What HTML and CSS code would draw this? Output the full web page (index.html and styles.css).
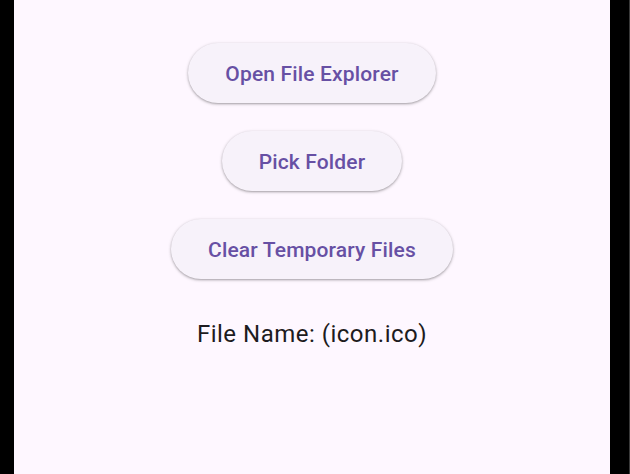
FILE: index.html
```html
<!DOCTYPE html>
<html>
<head>
<meta charset="utf-8">
<link rel="stylesheet" href="styles.css">
</head>
<body>
<div class="frame">
  <main class="app">
    <button class="btn btn-first">Open File Explorer</button>
    <button class="btn">Pick Folder</button>
    <button class="btn">Clear Temporary Files</button>
    <p class="filename">File Name: (icon.ico)</p>
  </main>
  <div class="edge"></div>
</div>
</body>
</html>
```

FILE: styles.css
```css
html, body {
  margin: 0;
  padding: 0;
  height: 100%;
  background: #000;
}
.frame {
  display: flex;
  height: 474px;
  width: 630px;
}
.app {
  margin-left: 14px;
  width: 596px;
  background: #fef7ff;
  display: flex;
  flex-direction: column;
  align-items: center;
  padding-top: 43px;
  box-sizing: border-box;
  font-family: Roboto, "Noto Sans", sans-serif;
}
.edge {
  margin-left: auto;
  width: 1px;
  background: #3a3a3a;
}
.btn {
  height: 60px;
  padding: 0 37px;
  border: none;
  border-radius: 30px;
  background: #f7f2fa;
  color: #6750a4;
  font-family: Roboto, "Noto Sans", sans-serif;
  font-weight: 500;
  font-size: 21px;
  letter-spacing: 0.15px;
  box-shadow: 0 1px 2px rgba(0,0,0,0.25), 0 1px 3px 1px rgba(0,0,0,0.1);
  margin-top: 28px;
  padding-top: 1px;
  cursor: pointer;
}
.btn-first {
  margin-top: 0;
}
.filename {
  margin: 37px 0 0;
  font-size: 24px;
  line-height: 36px;
  color: #1d1b20;
  letter-spacing: 0.5px;
}
```
